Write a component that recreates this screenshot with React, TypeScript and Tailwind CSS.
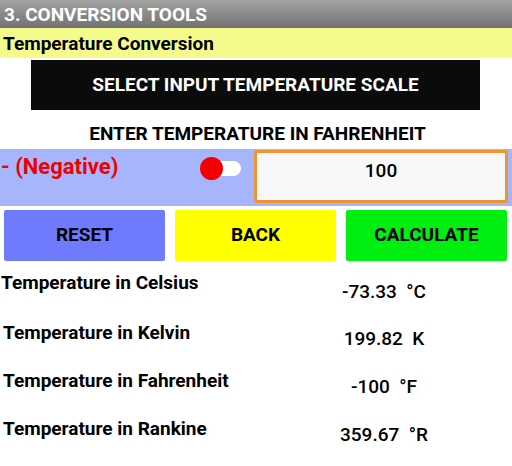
import { useState } from "react";

const rows = [
  { label: "Temperature in Celsius", value: "-73.33  °C", labelPad: "pl-[1px]", top: "pt-[10px]", h: "h-[50px]" },
  { label: "Temperature in Kelvin", value: "199.82  K", labelPad: "pl-[3px]", top: "pt-[7px]", h: "h-[48px]" },
  { label: "Temperature in Fahrenheit", value: "-100  °F", labelPad: "pl-[3px]", top: "pt-[7px]", h: "h-[48px]" },
  { label: "Temperature in Rankine", value: "359.67  °R", labelPad: "pl-[3px]", top: "pt-[7px]", h: "h-[48px]" },
];

export default function App() {
  const [temp, setTemp] = useState("100");

  return (
    <div className="w-[512px] h-[466px] bg-white overflow-hidden font-['Roboto',sans-serif]">
      {/* Title bar */}
      <div className="h-[28px] bg-gradient-to-b from-[#a3a3a3] to-[#727272] flex items-center pl-[4px]">
        <span className="text-white font-bold text-[19px] leading-none">3. CONVERSION TOOLS</span>
      </div>

      {/* Section header */}
      <div className="h-[30px] bg-[#f4fb8b] flex items-center pl-[3px] pt-[1px]">
        <span className="text-black font-bold text-[19px] leading-none">Temperature Conversion</span>
      </div>

      {/* Scale selector */}
      <div className="pt-[2px] pl-[31px]">
        <button className="w-[449px] h-[50px] bg-[#0b0b0b] text-white font-bold text-[19px] flex items-center justify-center">
          SELECT INPUT TEMPERATURE SCALE
        </button>
      </div>

      <div className="h-[39px] flex items-center justify-center pt-[7px]">
        <span className="text-black font-bold text-[19px] leading-none pl-[3px]">ENTER TEMPERATURE IN FAHRENHEIT</span>
      </div>

      {/* Input panel */}
      <div className="h-[57px] bg-[#a7b5fc] flex">
        <div className="w-[254px] flex items-start justify-between pt-[6px] pr-[13px]">
          <span className="text-[#f00000] font-bold text-[22px] leading-[24px] pl-[1px]">- (Negative)</span>
          <div className="relative mt-[2px] w-[41px] h-[23px]">
            <div className="absolute left-[8px] top-[4px] w-[33px] h-[15px] rounded-full bg-white" />
            <div className="absolute left-0 top-0 w-[23px] h-[23px] rounded-full bg-[#f40000]" />
          </div>
        </div>
        <div className="pt-[1px]">
          <input
            value={temp}
            onChange={(e) => setTemp(e.target.value)}
            className="w-[254px] h-[53px] border-[3px] border-[#f09332] rounded-[3px] bg-[#f8f8fa] text-center text-[19px] font-medium text-black outline-none pb-[12px]"
          />
        </div>
      </div>

      {/* Actions */}
      <div className="flex gap-[10px] pl-[4px] pt-[4px]">
        <button className="w-[161px] h-[51px] bg-[#6f7afd] rounded-[2px] font-bold text-[19px] text-black">RESET</button>
        <button className="w-[161px] h-[51px] bg-[#ffff00] rounded-[2px] font-bold text-[19px] text-black">BACK</button>
        <button className="w-[161px] h-[51px] bg-[#00ee10] rounded-[2px] font-bold text-[19px] text-black">CALCULATE</button>
      </div>

      {/* Results */}
      <div className="pt-[11px]">
        {rows.map((r) => (
          <div key={r.label} className={`flex ${r.h}`}>
            <div className={`w-[256px] ${r.labelPad}`}>
              <span className="text-black font-bold text-[19px] leading-[20px] whitespace-nowrap">{r.label}</span>
            </div>
            <div className={`w-[256px] flex justify-center ${r.top}`}>
              <span className="text-black font-medium text-[19px] leading-[20px] whitespace-pre">{r.value}</span>
            </div>
          </div>
        ))}
      </div>
    </div>
  );
}
